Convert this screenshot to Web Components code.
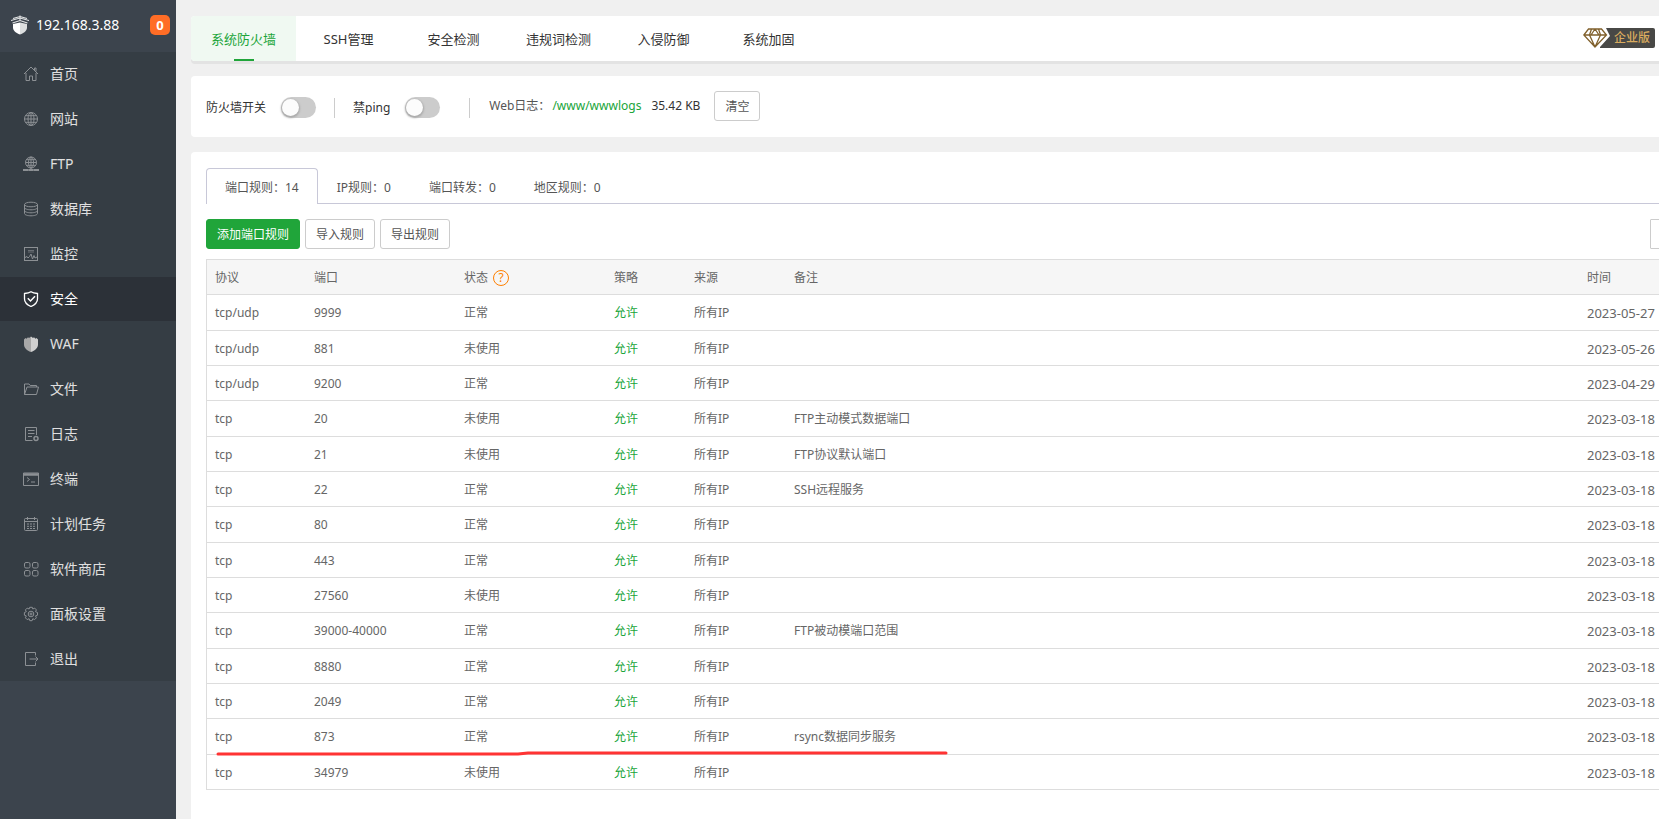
<!DOCTYPE html>
<html lang="zh-CN">
<head>
<meta charset="utf-8">
<title>系统防火墙</title>
<style>
html, body { margin: 0; height: 100%; }
body { overflow: hidden; background: #f0f0f0; font: 12px/18px "Noto Sans", "Noto Sans CJK SC", sans-serif; color: #666; }
</style>
</head>
<body>
<panel-app></panel-app>
<script>
const define = (name, html, setup) => {
  const tpl = document.createElement('template');
  tpl.innerHTML = html;
  customElements.define(name, class extends HTMLElement {
    connectedCallback() {
      if (this.shadowRoot) return;
      const root = this.attachShadow({ mode: 'open' });
      root.append(tpl.content.cloneNode(true));
      if (setup) setup.call(this, root);
    }
  });
};

const ICONS = {
  home: '<path d="M1 8 8 1l7 7M3 7v7.5h3.500V10h3v4.500H13V7M11.500 4V2h1.500v3.500"/>',
  globe: '<circle cx="8" cy="8" r="6.500"/><ellipse cx="8" cy="8" rx="3" ry="6.500"/><path d="M8 1.500v13M1.500 8h13M2.500 4.700h11M2.500 11.300h11"/>',
  ftp: '<circle cx="8" cy="6.500" r="5.500"/><ellipse cx="8" cy="6.500" rx="2.500" ry="5.500"/><path d="M8 1v13M2.500 6.500h11M3.500 3.700h9M3.500 9.300h9M0 14h16" /><path d="M0 14h5.500M10.500 14H16M6 14h4" stroke-width="2"/>',
  db: '<ellipse cx="8" cy="3.500" rx="6.500" ry="2.300"/><path d="M1.500 3.500v9c0 1.300 3 2.300 6.500 2.300s6.500-1 6.500-2.300v-9M1.500 6.500C1.500 7.800 4.500 8.800 8 8.800s6.500-1 6.500-2.300M1.500 9.500c0 1.300 3 2.300 6.500 2.300s6.500-1 6.500-2.300"/>',
  monitor: '<rect x="1.500" y="1.500" width="13" height="13"/><path d="M5 4.500h6M5 6h6" opacity=".6"/><path d="m2 11.500 2-1 1 1.500 1.500-1.500L8 8l1.500 5 1.500-3.500 1 2.500 2-1"/>',
  shield: '<path d="M8 .700C6 2 3.500 2.300 1.500 2.500V8c0 3.500 3 6 6.500 7.500 3.500-1.500 6.500-4 6.500-7.500V2.500C12.500 2.300 10 2 8 .700z"/><path d="m4.800 7.300 2.700 2.700L12 5.300" stroke-width="1.500"/>',
  waf: '<path d="M1 3.500 2.500 2l1 .8L5 1.300l1 .8L8 .500V16c-4-1.500-7-4-7-7.500z" fill="#a8a8a8" stroke="none"/><path d="M15 3.500 13.500 2l-1 .8L11 1.300l-1 .8L8 .500V16c4-1.500 7-4 7-7.500z" fill="#d0d0d0" stroke="none"/>',
  folder: '<path d="M1.500 13.500V3h4.500l1.200 1.500h6.300V6M1.500 13.500 4 6h11.500l-2 7.500z"/>',
  log: '<path d="M9.500 14.500h-7v-13h11V9M5 4.500h6.500M5 7.500h6.500M5 10.500h4"/><circle cx="13" cy="12.500" r="2" stroke-width="1.500"/>',
  term: '<path d="M.500 2h15v12.500H.500z"/><path d="M.500 3.500h15" stroke-width="2.500"/><path d="m4 6.500 2.500 2L4 10.500M8 11h4"/>',
  cal: '<rect x="1.500" y="2.500" width="13" height="12" rx="1"/><path d="M1.500 5.500h13M4.500 1v3M11.500 1v3"/><path d="M4 8h8M4 10.300h8M4 12.500h8" stroke-dasharray="2 1"/>',
  grid: '<rect x="1.500" y="1.500" width="5.500" height="5.500" rx="1.500"/><rect x="9.500" y="1.500" width="5.500" height="5.500" rx="1.500"/><rect x="1.500" y="9.500" width="5.500" height="5.500" rx="1.500"/><rect x="9.500" y="9.500" width="5.500" height="5.500" rx="1.500"/>',
  gear: '<path d="m6.700 1.300 2.600 0 .500 1.700 1.900-.9 1.700 1.800-.9 1.800 2 .800v2.700l-2 .700.9 1.900-1.800 1.800-1.800-.9-.700 2H6.800l-.700-2-1.900.9-1.800-1.800.9-1.900-1.900-.700V6.500l1.900-.800-.9-1.800L4.200 2.100l1.900.9z"/><circle cx="8" cy="8" r="2.800"/><circle cx="8" cy="8" r="1"/>',
  exit: '<path d="M12.500 4.500v-3h-10v13h10v-3M6.500 8H15M12.500 5.500 15 8l-2.500 2.500"/>'
};

define('nav-item', `
<style>
:host { display: block; }
a { display: flex; align-items: center; gap: 11px; height: 44px; padding-left: 23px; font-size: 14px; line-height: 20px; color: #e0e0e0; text-decoration: none; }
svg { width: 16px; height: 16px; fill: none; stroke: #8c9094; stroke-width: 1; flex: none; }
:host([active]) a { background: #2c3138; color: #fff; }
:host([active]) svg { stroke: #fff; stroke-width: 1.3; }
</style>
<a href="#"><svg viewBox="0 0 16 16" aria-hidden="true"></svg><span><slot></slot></span></a>`,
function (root) { root.querySelector('svg').innerHTML = ICONS[this.getAttribute('icon')]; });

define('side-bar', `
<style>
:host { display: block; background: #3c444d; min-height: 100%; }
header { display: flex; align-items: center; height: 52px; padding: 0 6px 2px 11px; box-sizing: border-box; }
header svg { width: 18px; height: 20px; margin-right: 7px; }
.ip { flex: 1; font-size: 14px; line-height: 20px; color: #fff; }
.count { width: 20px; height: 20px; border-radius: 5px; background: #ff6d26; color: #fff; font-weight: 700; font-size: 13px; line-height: 20px; text-align: center; }
nav { display: grid; gap: 1px; background: #353d44; }
</style>
<header>
  <svg viewBox="0 0 18 20" aria-hidden="true"><path d="M2 9 9 7.500v12C5 18 2 16 2 12.500z" fill="#fff"/><path d="M16 9 9 7.500v12c4-1.500 7-3.500 7-7z" fill="#dcdedf"/><path d="M0 5.500 9 3l9 2.500M2 3.500 9 1.500l7 2M1.500 8 9 5.500 16.500 8M9 .500v5" fill="none" stroke="#e4e6e7" stroke-width="1.100"/></svg>
  <span class="ip">192.168.3.88</span><span class="count">0</span>
</header>
<nav>
  <nav-item icon="home">首页</nav-item>
  <nav-item icon="globe">网站</nav-item>
  <nav-item icon="ftp">FTP</nav-item>
  <nav-item icon="db">数据库</nav-item>
  <nav-item icon="monitor">监控</nav-item>
  <nav-item icon="shield" active>安全</nav-item>
  <nav-item icon="waf">WAF</nav-item>
  <nav-item icon="folder">文件</nav-item>
  <nav-item icon="log">日志</nav-item>
  <nav-item icon="term">终端</nav-item>
  <nav-item icon="cal">计划任务</nav-item>
  <nav-item icon="grid">软件商店</nav-item>
  <nav-item icon="gear">面板设置</nav-item>
  <nav-item icon="exit">退出</nav-item>
</nav>`);

define('edition-badge', `
<style>
:host { display: flex; align-items: center; height: 20px; }
svg { width: 28px; height: 20px; flex: none; margin-right: -1px; }
span { height: 20px; padding: 0 5px 0 4px; border-radius: 0 2px 2px 0; background: #484846; color: #d9ab5f; font-size: 12px; font-weight: 500; line-height: 20px; }
</style>
<svg viewBox="0 0 28 20" aria-hidden="true"><path d="M23 0h5v20H17v-1l10-11z" fill="#484846"/><path d="M5.500 1h13L23.500 7 12 19 .800 7zM.800 7h22.700M8.500 1 6.500 7 12 19l5.500-12-2-6M12 1 8 7M12 1l4 6" fill="none" stroke="#80602c" stroke-width="1.300"/></svg>
<span><slot></slot></span>`);

define('top-tabs', `
<style>
:host { display: flex; align-items: center; height: 45px; background: #fff; border-radius: 4px 0 0 4px; box-shadow: 0 3px 0 #e3e3e3; }
nav { display: flex; flex: 1; height: 45px; }
a { position: relative; width: 105px; text-align: center; font-size: 13px; line-height: 46px; color: #333; text-decoration: none; }
a.on { background: #f0f9f2; color: #20a53a; border-radius: 4px 0 0 4px; }
a.on::after { content: ""; position: absolute; left: calc(50% - 10px); bottom: 0; width: 20px; height: 2px; background: #20a53a; }
edition-badge { margin: 0 4px 1px 0; }
</style>
<nav><a class="on" href="#">系统防火墙</a><a href="#">SSH管理</a><a href="#">安全检测</a><a href="#">违规词检测</a><a href="#">入侵防御</a><a href="#">系统加固</a></nav>
<edition-badge>企业版</edition-badge>`);

define('toggle-switch', `
<style>
:host { display: block; }
label { display: flex; align-items: center; gap: 15px; padding-top: 2px; color: #333; }
input { appearance: none; margin: 0; width: 35px; height: 21px; border-radius: 11px; background: #ccc; display: flex; align-items: center; }
input::before { content: ""; width: 17px; height: 17px; margin-left: 1px; border-radius: 50%; background: #fcfcfc; box-shadow: 0 1px 2px 1px #aaa; }
</style>
<label><slot></slot><input type="checkbox" role="switch"></label>`);

define('push-button', `
<style>
:host { display: block; }
button { display: block; height: 30px; padding: 1px 10px 0; border: 1px solid #ccc; border-radius: 3px; background: #fff; color: #555; font: inherit; line-height: 18px; }
:host([primary]) button { background: #20a53a; border-color: #20a53a; color: #fff; }
</style>
<button type="button"><slot></slot></button>`);

define('firewall-bar', `
<style>
:host { display: flex; align-items: center; height: 61px; padding-left: 15px; background: #fff; border-radius: 4px 0 0 4px; }
i { width: 1px; height: 20px; background: #ccc; margin: 2px 18px 0; }
i.far { margin: 2px 19px 0 29px; }
.log { display: flex; align-items: center; gap: 2px; padding-bottom: 1px; color: #555; }
.log b { font-weight: 400; color: #333; margin: 0 12px 0 8px; }
a { color: #20a53a; text-decoration: none; }
</style>
<toggle-switch>防火墙开关</toggle-switch><i></i><toggle-switch>禁ping</toggle-switch><i class="far"></i>
<div class="log"><span>Web日志：</span><a href="#">/www/wwwlogs</a><b>35.42 KB</b><push-button>清空</push-button></div>`);

define('rule-tabs', `
<style>
:host { display: flex; height: 36px; }
a { padding: 0 19px; line-height: 40px; height: 35px; border-bottom: 1px solid #c8c8d8; color: #555; text-decoration: none; white-space: nowrap; }
a.on { padding: 0 18px; line-height: 38px; border: 1px solid #c8c8d8; border-bottom: 0; border-radius: 4px 4px 0 0; }
div { flex: 1; border-bottom: 1px solid #c8c8d8; }
</style>
<a class="on" href="#">端口规则：14</a><a href="#">IP规则：0</a><a href="#">端口转发：0</a><a href="#">地区规则：0</a><div></div>`);

const RULES = [
  ['tcp/udp', '9999', '正常', '', '2023-05-27'],
  ['tcp/udp', '881', '未使用', '', '2023-05-26'],
  ['tcp/udp', '9200', '正常', '', '2023-04-29'],
  ['tcp', '20', '未使用', 'FTP主动模式数据端口', '2023-03-18'],
  ['tcp', '21', '未使用', 'FTP协议默认端口', '2023-03-18'],
  ['tcp', '22', '正常', 'SSH远程服务', '2023-03-18'],
  ['tcp', '80', '正常', '', '2023-03-18'],
  ['tcp', '443', '正常', '', '2023-03-18'],
  ['tcp', '27560', '未使用', '', '2023-03-18'],
  ['tcp', '39000-40000', '正常', 'FTP被动模端口范围', '2023-03-18'],
  ['tcp', '8880', '正常', '', '2023-03-18'],
  ['tcp', '2049', '正常', '', '2023-03-18'],
  ['tcp', '873', '正常', 'rsync数据同步服务', '2023-03-18'],
  ['tcp', '34979', '未使用', '', '2023-03-18']
];

define('rule-table', `
<style>
:host { display: block; }
table { width: 100%; table-layout: fixed; border-collapse: separate; border-spacing: 0; border: 1px solid #ddd; border-width: 1px 0 0 1px; }
th, td { box-sizing: border-box; height: 35px; padding: 2px 8px 0; border-bottom: 1px solid #ddd; text-align: left; font-weight: 400; white-space: nowrap; }
th { background: #f6f6f6; }
tbody tr:nth-child(3n+1) td { height: 36px; padding-top: 1px; }
td.ok a { color: #20a53a; text-decoration: none; }
th:last-child, td:last-child { padding-right: 0; }
td:last-child { font-size: 13px; }
th div { display: flex; align-items: center; gap: 5px; }
button { width: 16px; height: 16px; padding: 0; border: 1px solid #ff7f00; border-radius: 50%; background: none; color: #ff7f00; font: inherit; line-height: 14px; }
tr.marked td:first-child { position: relative; }
.mark { position: absolute; left: 9px; top: 31px; width: 732px; height: 8px; fill: none; stroke: #f33; stroke-width: 3; stroke-linecap: round; z-index: 1; }
</style>
<table>
<colgroup><col style="width:99px"><col style="width:150px"><col style="width:150px"><col style="width:80px"><col style="width:100px"><col><col style="width:80px"></colgroup>
<thead><tr><th>协议</th><th>端口</th><th><div>状态<button type="button" aria-label="状态说明">?</button></div></th><th>策略</th><th>来源</th><th>备注</th><th>时间</th></tr></thead>
<tbody></tbody>
</table>`,
function (root) {
  root.querySelector('tbody').innerHTML = RULES.map(([proto, port, state, note, date]) => {
    const marked = port === '873';
    const line = marked ? '<svg class="mark" viewBox="0 0 732 8" aria-hidden="true"><path d="M2 4H302L312 3H730"/></svg>' : '';
    return `<tr${marked ? ' class="marked"' : ''}><td>${proto}${line}</td><td>${port}</td><td>${state}</td><td class="ok"><a href="#">允许</a></td><td>所有IP</td><td>${note}</td><td>${date}</td></tr>`;
  }).join('');
});

define('rules-panel', `
<style>
:host { display: block; background: #fff; border-radius: 4px 0 0 0; padding: 16px 0 0 15px; overflow: hidden; }
.tools { display: flex; gap: 5px; margin: 15px 0 10px; }
input { box-sizing: border-box; width: 200px; height: 30px; margin: 0 -191px 0 auto; border: 1px solid #ccc; border-radius: 1px; background: #fff; font: inherit; }
</style>
<rule-tabs></rule-tabs>
<div class="tools"><push-button primary>添加端口规则</push-button><push-button>导入规则</push-button><push-button>导出规则</push-button><input type="search" aria-label="搜索"></div>
<rule-table></rule-table>`);

define('panel-app', `
<style>
:host { display: grid; grid-template-columns: 176px minmax(0, 1fr); height: 100vh; overflow: hidden; }
main { display: grid; grid-template-rows: auto auto 1fr; gap: 15px; padding: 16px 0 0 15px; }
</style>
<side-bar></side-bar>
<main><top-tabs></top-tabs><firewall-bar></firewall-bar><rules-panel></rules-panel></main>`);
</script>
</body>
</html>
